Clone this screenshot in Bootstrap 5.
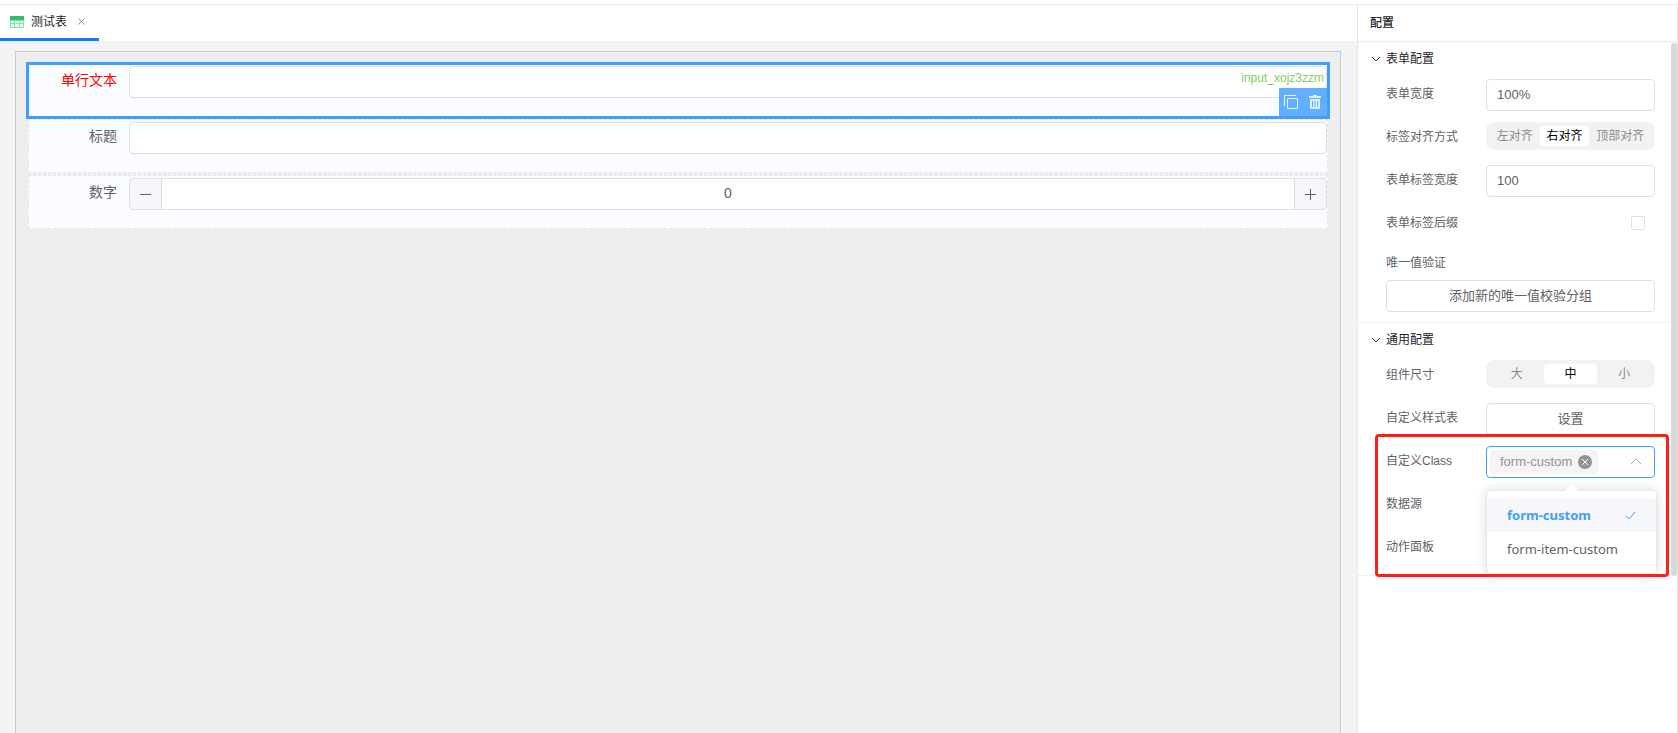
<!DOCTYPE html>
<html lang="zh-CN">
<head>
<meta charset="utf-8">
<meta name="viewport" content="width=device-width, initial-scale=1">
<title>测试表</title>
<link href="https://cdn.jsdelivr.net/npm/bootstrap@5.3.0/dist/css/bootstrap.min.css" rel="stylesheet">
<script src="https://cdn.jsdelivr.net/npm/bootstrap@5.3.0/dist/js/bootstrap.bundle.min.js" defer></script>
<style>
  :root { --line: #dcdfe6; --ink: #606266; --blue: #409eff; }
  body { font-family: "Liberation Sans", "Noto Sans CJK SC", sans-serif; font-size: 12px; line-height: 20px; color: var(--ink); background: #fff; }
  .app { min-height: 100vh; padding-top: 4px; }
  .app-body { border-top: 1px solid #ebebeb; border-right: 1px solid #e4e4e4; }
  .form-control, .btn { font-size: 13px; line-height: 20px; color: var(--ink); border-color: var(--line); border-radius: 4px; }
  .form-control { height: 32px; padding: 4px 10px 6px; background: #fff; }
  .btn { height: 32px; padding: 4px 10px; background: #fff; }

  .tabs { height: 36px; background: #fff; }
  .doc-tab { width: 99px; padding: 0 13px 0 10px; border-bottom: 3px solid #0d7bff; color: #1f2329; gap: 7px; }
  .bare { padding: 0; border: 0; background: none; display: flex; color: inherit; }
  .stage { background: #f2f3f5; padding: 10px 16px 0 15px; }
  .board { background: #eee; border: 1px solid #c8c9cc; border-bottom: 0; padding: 11px 12px; }
  .cell { position: relative; height: 54px; padding: 2px 0; background: #fafcff; border: 1px dashed #e4e7f0; font-size: 14px; margin-bottom: 2px; }
  .cell label { width: 100px; flex: none; padding-right: 12px; text-align: right; line-height: 28px; }
  .cell .form-control { font-size: 14px; }
  .picked label { color: #f00; }
  .picked::after { content: ""; position: absolute; inset: -2px -3px -3px; border: 3px solid var(--blue); pointer-events: none; }
  .cell-id { position: absolute; right: 3px; top: 4px; color: #85ce61; font-size: 12px; }
  .cell-tools { position: absolute; right: 0; bottom: 0; height: 28px; width: 48px; padding-left: 5px; gap: 11px; background: rgba(64,158,255,.82); color: #fff; }
  .stepper .btn { width: 33px; padding: 0; background: #f5f7fa; display: flex; align-items: center; justify-content: center; }

  .side { width: 320px; border-left: 1px solid #e6e6e6; flex: none; }
  .side-title { height: 37px; padding: 0 12px; border-bottom: 1px solid #ebebeb; color: #1f2329; font-weight: 500; line-height: 36px; }
  .group { padding: 7px 15px 0 28px; border-bottom: 1px solid #ebeef5; width: 312px; }
  .group h2 { font-size: 12px; line-height: 20px; font-weight: 400; color: #1f2329; margin: 0 0 10px -16px; display: flex; align-items: center; gap: 4px; }
  .opt { display: flex; height: 43px; align-items: flex-start; }
  .opt > label, .opt > .cap { width: 100px; flex: none; line-height: 30px; }
  .opt > .form-control, .opt > .btn, .opt > .seg, .opt > .picker { width: 169px; }
  .cap-row { line-height: 24px; margin-bottom: 5px; }
  .add-rule { margin-bottom: 10px; }
  .seg { display: flex; height: 28px; padding: 4px; background: #f2f2f2; border-radius: 8px; }
  .seg label { flex: 1 1 auto; text-align: center; line-height: 20px; border-radius: 4px; color: #8a8a8a; cursor: pointer; }
  .seg input:checked + label { background: #fff; color: #000; }
  .seg-even label { flex: 1 1 0; }
  .form-check-input { width: 14px; height: 14px; margin: 8px 10px 0 auto; border-color: var(--line); border-radius: 2px !important; }
  .picker { position: relative; }
  .picker-box { height: 32px; border: 1px solid var(--blue); border-radius: 4px; padding: 0 12px 0 3px; background: #fff; }
  .tagx { height: 24px; padding: 0 6px 0 10px; background: #f4f4f5; border-radius: 4px; color: #909399; font-size: 13px; gap: 6px; }
  .menu { position: absolute; top: 44px; left: 0; width: 171px; height: 84px; padding: 7px 0; border: 1px solid #e4e7ed; border-radius: 4px; background: #fff; box-shadow: 0 0 12px rgba(0,0,0,.14); z-index: 2; font: 13px/34px "Noto Sans", sans-serif; }
  .menu::before { content: ""; position: absolute; left: 80px; top: -5px; width: 9px; height: 9px; background: #fff; transform: rotate(45deg); border-radius: 1px; }
  .menu a { display: flex; align-items: center; justify-content: space-between; height: 34px; padding: 0 20px; color: var(--ink); text-decoration: none; }
  .menu a.on { background: #f5f7fa; color: var(--blue); font-weight: 700; }
  .frame { position: absolute; left: -11px; top: -12px; width: 294px; height: 143px; border: 3px solid #ff2015; border-radius: 4px; z-index: 3; pointer-events: none; }
  .thumb { position: absolute; right: 0; top: 38px; width: 6px; height: 533px; background: #d9d9d9; border-radius: 3px; }
</style>
</head>
<body>
<div class="app d-flex flex-column">
  <div class="app-body d-flex flex-grow-1">
    <main class="flex-grow-1 d-flex flex-column">
      <nav class="tabs d-flex">
        <div class="doc-tab d-flex align-items-center">
          <svg width="14" height="12" viewBox="0 0 14 12"><rect width="14" height="12" rx="1" fill="#8edfb0"/><path d="M0 1q0-1 1-1h12q1 0 1 1v3H0z" fill="#2dbe6c"/><path d="M1 5h3v2H1zM5 5h4v2H5zM10 5h3v2h-3zM1 8h3v3H1zM5 8h4v3H5zM10 8h3v3h-3z" fill="#e6f9ee"/></svg>
          <span>测试表</span>
          <button class="bare ms-1" aria-label="关闭"><svg width="7" height="7" viewBox="0 0 7 7" stroke="#8a8d92" fill="none"><path d="M.5.5l6 6M6.500.5l-6 6"/></svg></button>
        </div>
      </nav>
      <div class="stage flex-grow-1 d-flex">
        <form class="board flex-grow-1">
          <div class="cell picked d-flex">
            <label for="f1">单行文本</label>
            <input id="f1" class="form-control">
            <span class="cell-id">input_xojz3zzm</span>
            <div class="cell-tools d-flex align-items-center">
              <button type="button" class="bare" aria-label="复制"><svg width="14" height="14" viewBox="0 0 14 14" fill="none" stroke="#fff" stroke-opacity=".85"><path d="M3.500 3.500h10v10h-10zM.5 11V.5H12"/></svg></button>
              <button type="button" class="bare" aria-label="删除"><svg width="12" height="14" viewBox="0 0 12 14" fill="#fff" fill-opacity=".8"><path d="M4 0h4v1h4v2H0V1h4zM1 4h10v9q0 1-1 1H2q-1 0-1-1zm2 2v6h1V6zm2.500 0v6h1V6zM8 6v6h1V6z" fill-rule="evenodd"/></svg></button>
            </div>
          </div>
          <div class="cell d-flex">
            <label for="f2">标题</label>
            <input id="f2" class="form-control">
          </div>
          <div class="cell d-flex">
            <label for="f3">数字</label>
            <div class="stepper input-group flex-grow-1 w-auto flex-nowrap">
              <button type="button" class="btn" aria-label="减少"><svg width="11" height="11" stroke="#606266"><path d="M0 5.500h11"/></svg></button>
              <input id="f3" class="form-control text-center" value="0">
              <button type="button" class="btn" aria-label="增加"><svg width="11" height="11" stroke="#606266"><path d="M0 5.500h11M5.500 0v11"/></svg></button>
            </div>
          </div>
        </form>
      </div>
    </main>

    <aside class="side position-relative">
      <div class="side-title">配置</div>
      <section class="group">
        <h2><svg width="12" height="12" viewBox="0 0 12 12" fill="none" stroke="#333"><path d="M2 4l4 4 4-4"/></svg>表单配置</h2>
        <div class="opt"><label for="w">表单宽度</label><input id="w" class="form-control" value="100%"></div>
        <div class="opt"><span class="cap">标签对齐方式</span>
          <div class="seg">
            <input class="visually-hidden" type="radio" name="al" id="a1"><label for="a1">左对齐</label>
            <input class="visually-hidden" type="radio" name="al" id="a2" checked><label for="a2">右对齐</label>
            <input class="visually-hidden" type="radio" name="al" id="a3"><label for="a3">顶部对齐</label>
          </div></div>
        <div class="opt"><label for="lw">表单标签宽度</label><input id="lw" class="form-control" value="100"></div>
        <div class="opt"><label for="sf">表单标签后缀</label><input id="sf" type="checkbox" class="form-check-input"></div>
        <div class="cap-row">唯一值验证</div>
        <button class="btn w-100 d-block add-rule">添加新的唯一值校验分组</button>
      </section>
      <section class="group">
        <h2><svg width="12" height="12" viewBox="0 0 12 12" fill="none" stroke="#333"><path d="M2 4l4 4 4-4"/></svg>通用配置</h2>
        <div class="opt"><span class="cap">组件尺寸</span>
          <div class="seg seg-even">
            <input class="visually-hidden" type="radio" name="sz" id="s1"><label for="s1">大</label>
            <input class="visually-hidden" type="radio" name="sz" id="s2" checked><label for="s2">中</label>
            <input class="visually-hidden" type="radio" name="sz" id="s3"><label for="s3">小</label>
          </div></div>
        <div class="opt"><span class="cap">自定义样式表</span><button class="btn">设置</button></div>
        <div class="opt position-relative"><span class="cap">自定义Class</span>
          <div class="picker">
            <div class="picker-box d-flex align-items-center justify-content-between">
              <span class="tagx d-flex align-items-center">form-custom
                <button class="bare" aria-label="移除"><svg width="14" height="14" viewBox="0 0 14 14"><circle cx="7" cy="7" r="7" fill="#909399"/><path d="M4 4l6 6M10 4l-6 6" stroke="#fff"/></svg></button></span>
              <svg width="12" height="12" viewBox="0 0 12 12" fill="none" stroke="#a8abb2"><path d="M1 8l5-5 5 5"/></svg>
            </div>
            <div class="menu">
              <a href="#" class="on">form-custom<svg width="11" height="9" viewBox="0 0 11 9" fill="none" stroke="#409eff"><path d="M1 5l3 3 6-7"/></svg></a>
              <a href="#">form-item-custom</a>
            </div>
          </div>
          <div class="frame"></div>
        </div>
        <div class="opt"><span class="cap">数据源</span></div>
        <div class="opt"><span class="cap">动作面板</span></div>
      </section>
      <div class="thumb"></div>
    </aside>
  </div>
</div>
</body>
</html>
